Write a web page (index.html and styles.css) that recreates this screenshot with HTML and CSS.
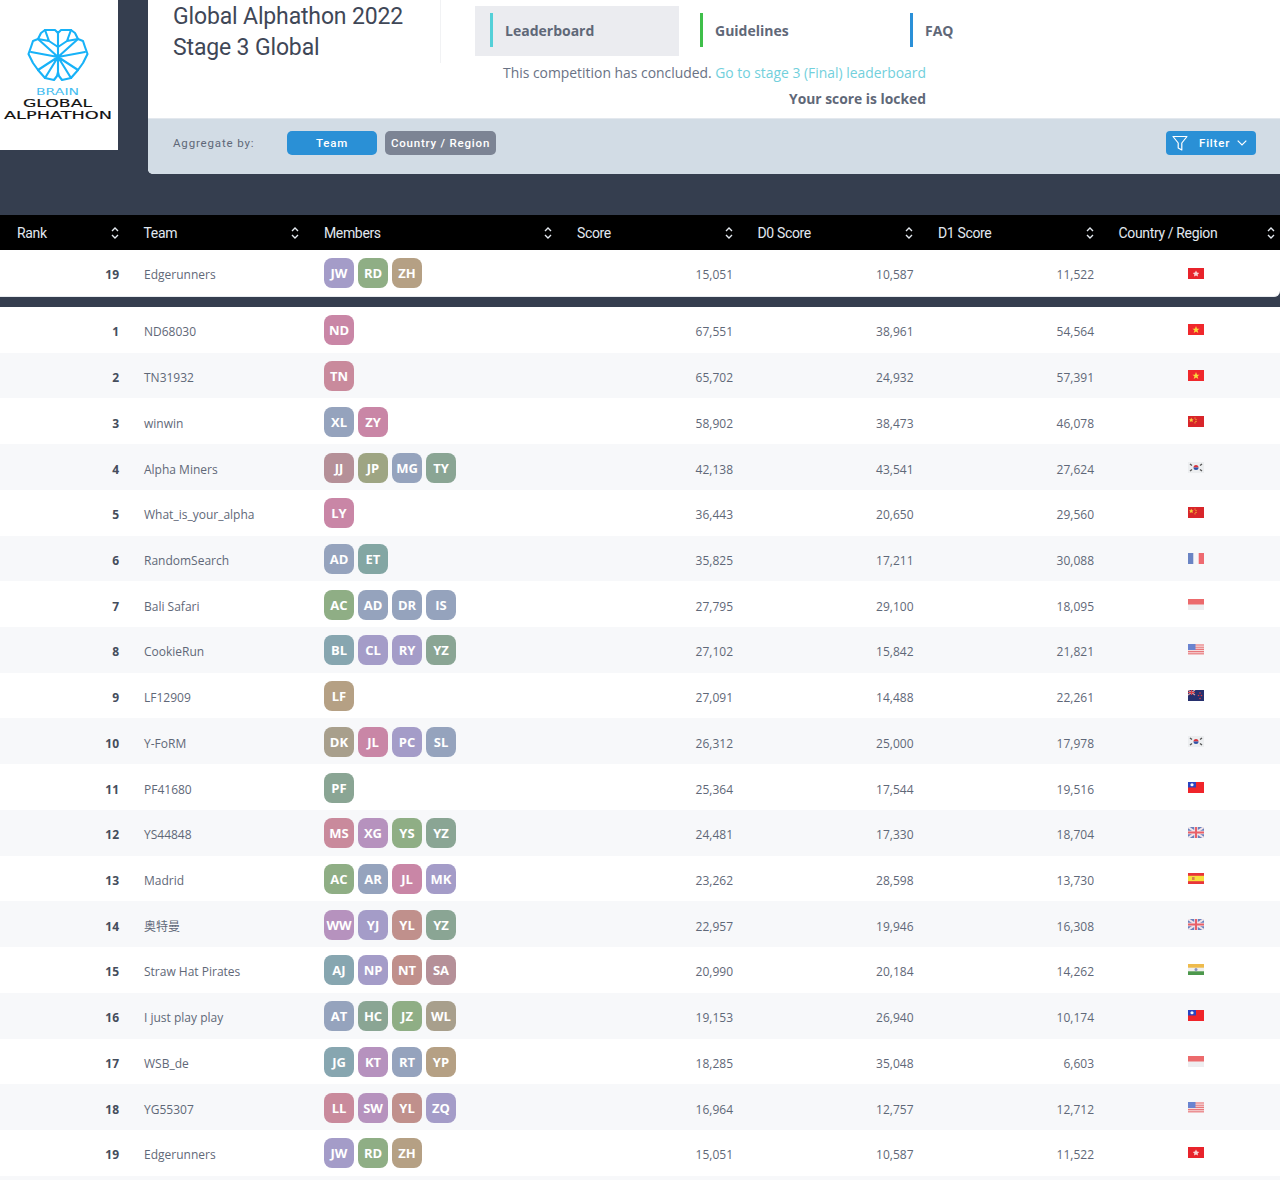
FILE: index.html
```html
<!DOCTYPE html>
<html lang="en">
<head>
    <meta charset="UTF-8">
    <meta name="viewport" content="width=device-width, initial-scale=1.0">
    <title>Global Alphathon 2022 Leaderboard</title>
    <link rel="stylesheet" href="styles.css">
</head>
<body>

    <svg class="defs" xmlns="http://www.w3.org/2000/svg">
        <symbol id="sort" viewBox="0 0 8 14"><path d="M1 5 L4 2 L7 5 M1 9 L4 12 L7 9" fill="none" stroke="#e4e9ef" stroke-width="1.4"/></symbol>
        <symbol id="hk" viewBox="0 0 16 11"><rect width="16" height="11" fill="#e8232b"/><path d="M8 2.5 L9 4.6 L11.2 4.9 L9.6 6.4 L10 8.6 L8 7.5 L6 8.6 L6.4 6.4 L4.8 4.9 L7 4.6 Z" fill="#f8d4d4"/></symbol>
        <symbol id="vn" viewBox="0 0 16 11"><rect width="16" height="11" fill="#f0282c"/><path d="M8 2 L9 4.7 L11.6 4.7 L9.5 6.3 L10.3 9 L8 7.4 L5.7 9 L6.5 6.3 L4.4 4.7 L7 4.7 Z" fill="#f8dc3c"/></symbol>
        <symbol id="cn" viewBox="0 0 16 11"><rect width="16" height="11" fill="#d8252a"/><path d="M3.2 1.5 L4 3.2 L5.6 3.4 L4.4 4.4 L4.8 6 L3.2 5.2 L1.7 6 L2.1 4.4 L1 3.4 L2.6 3.2 Z" fill="#f4cf3a"/><circle cx="7" cy="2" r=".6" fill="#f4cf3a"/><circle cx="8" cy="3.6" r=".6" fill="#f4cf3a"/><circle cx="8" cy="5.4" r=".6" fill="#f4cf3a"/><circle cx="7" cy="6.8" r=".6" fill="#f4cf3a"/></symbol>
        <symbol id="kr" viewBox="0 0 16 11"><rect width="16" height="11" fill="#eceef0"/><path d="M5.5 5.5 A2.5 2.5 0 0 1 10.5 5.5 Z" fill="#d8343c"/><path d="M5.5 5.5 A2.5 2.5 0 0 0 10.5 5.5 Z" fill="#2e54a8"/><path d="M2 2 L4 3.6 M12 3.6 L14 2 M2 9 L4 7.4 M12 7.4 L14 9" stroke="#555" stroke-width="1.3"/></symbol>
        <symbol id="fr" viewBox="0 0 16 11"><rect width="16" height="11" fill="#f6f6f8"/><rect width="5.3" height="11" fill="#6a84c4"/><rect x="10.7" width="5.3" height="11" fill="#ee6a70"/></symbol>
        <symbol id="id" viewBox="0 0 16 11"><rect width="16" height="11" fill="#eeeef0"/><rect width="16" height="5.5" fill="#ec6a6c"/></symbol>
        <symbol id="us" viewBox="0 0 16 11"><rect width="16" height="11" fill="#f6dcdc"/><path d="M0 1 H16 M0 3.2 H16 M0 5.4 H16 M0 7.6 H16 M0 9.8 H16" stroke="#e8787c" stroke-width="1.1"/><rect width="7.5" height="6" fill="#6a84d0"/></symbol>
        <symbol id="nz" viewBox="0 0 16 11"><rect width="16" height="11" fill="#27306e"/><path d="M0 0 L7 5 M7 0 L0 5" stroke="#d8a0a8" stroke-width="1.2"/><path d="M3.5 0 V5 M0 2.5 H7" stroke="#d84048" stroke-width="1.2"/><circle cx="12" cy="3" r=".8" fill="#e03840"/><circle cx="10.5" cy="5.5" r=".8" fill="#e03840"/><circle cx="13.5" cy="5.5" r=".8" fill="#e03840"/><circle cx="12" cy="8.5" r=".8" fill="#e03840"/></symbol>
        <symbol id="tw" viewBox="0 0 16 11"><rect width="16" height="11" fill="#f0242a"/><rect width="8" height="5.5" fill="#2a44c0"/><circle cx="4" cy="2.75" r="1.6" fill="#f6f6fa"/></symbol>
        <symbol id="uk" viewBox="0 0 16 11"><rect width="16" height="11" fill="#6a80bc"/><path d="M0 0 L16 11 M16 0 L0 11" stroke="#f0e4ea" stroke-width="2"/><path d="M8 0 V11 M0 5.5 H16" stroke="#f0e4ea" stroke-width="3.6"/><path d="M8 0 V11 M0 5.5 H16" stroke="#e86068" stroke-width="2"/></symbol>
        <symbol id="es" viewBox="0 0 16 11"><rect width="16" height="11" fill="#e8343a"/><rect y="2.8" width="16" height="5.4" fill="#f6e03c"/><rect x="4" y="4" width="2.6" height="3" fill="#d8804c"/></symbol>
        <symbol id="in" viewBox="0 0 16 11"><rect width="16" height="11" fill="#f0f0ee"/><rect width="16" height="3.7" fill="#eebb4c"/><rect y="7.3" width="16" height="3.7" fill="#4c984c"/><circle cx="8" cy="5.5" r="1.5" fill="#8a94c0"/></symbol>
    </svg>

    <div class="top">
        <a class="logo" href="#">
            <svg width="118" height="124" viewBox="0 0 118 124" xmlns="http://www.w3.org/2000/svg">
                <g fill="none" stroke="#17b2f8" stroke-width="2.1" stroke-linejoin="round" stroke-linecap="round">
                    <path d="M58 33 L55 30 L45 30 L41 33 L38 39 L33 41 L31 47 L28.5 54 L33 63 L38 70 L45 78 L54 80 L57 76 L58 72 L59 76 L62 80 L71 78 L78 70 L83 63 L87.5 54 L85 47 L83 41 L78 39 L75 33 L71 30 L61 30 Z"/>
                    <path d="M58 33 V72 M58 57 L31 52 M58 57 L85 52 M58 57 L38 39 M58 57 L78 39 M58 57 L45 78 M58 57 L71 78 M58 57 L38 70 M58 57 L78 70"/>
                    <path d="M45 30 L49 41 L58 47 L67 41 L71 30 M38 39 L49 41 M78 39 L67 41"/>
                </g>
                <text class="logo-brain" x="36" y="95" textLength="43" lengthAdjust="spacingAndGlyphs">BRAIN</text>
                <text class="logo-name" x="23" y="107" textLength="69" lengthAdjust="spacingAndGlyphs">GLOBAL</text>
                <text class="logo-name" x="4" y="119" textLength="108" lengthAdjust="spacingAndGlyphs">ALPHATHON</text>
            </svg>
        </a>

        <div class="card">
            <div class="card-main">
                <h1 class="title">Global Alphathon 2022<br>Stage 3 Global</h1>
                <div class="card-side">
                    <nav class="tabs">
                        <a class="tab tab-active tab-teal" href="#">Leaderboard</a>
                        <a class="tab tab-green" href="#">Guidelines</a>
                        <a class="tab tab-blue" href="#">FAQ</a>
                    </nav>
                    <p class="notice">This competition has concluded. <a href="#">Go to stage 3 (Final) leaderboard</a></p>
                    <p class="locked">Your score is locked</p>
                </div>
            </div>
            <div class="toolbar">
                <span class="aggregate">Aggregate by:</span>
                <button class="pill pill-team">Team</button>
                <button class="pill pill-country">Country / Region</button>
                <button class="filter">
                    <svg width="16" height="16" viewBox="0 0 16 16"><path d="M1 1.5 H15 L9.8 8 V15 L6.2 13 V8 Z" fill="none" stroke="#fff" stroke-width="1.2" stroke-linejoin="round"/></svg>
                    <span>Filter</span>
                    <svg width="10" height="6" viewBox="0 0 10 6"><path d="M.7 .7 L5 5 L9.3 .7" fill="none" stroke="#fff" stroke-width="1.2"/></svg>
                </button>
            </div>
        </div>
    </div>

    <div class="board">
        <div class="row head">
            <div class="hcell"><span>Rank</span><svg class="sort"><use href="#sort"/></svg></div>
            <div class="hcell"><span>Team</span><svg class="sort"><use href="#sort"/></svg></div>
            <div class="hcell"><span>Members</span><svg class="sort"><use href="#sort"/></svg></div>
            <div class="hcell"><span>Score</span><svg class="sort"><use href="#sort"/></svg></div>
            <div class="hcell"><span>D0 Score</span><svg class="sort"><use href="#sort"/></svg></div>
            <div class="hcell"><span>D1 Score</span><svg class="sort"><use href="#sort"/></svg></div>
            <div class="hcell hcell-last"><span>Country / Region</span><svg class="sort"><use href="#sort"/></svg></div>
        </div>

        <div class="row mine">
            <div class="rank">19</div><div class="team">Edgerunners</div>
            <div class="members"><span class="av violet">JW</span><span class="av green">RD</span><span class="av tan">ZH</span></div>
            <div class="num">15,051</div><div class="num">10,587</div><div class="num">11,522</div>
            <div class="flag"><svg><use href="#hk"/></svg></div>
        </div>

        <div class="rows">
            <div class="row">
                <div class="rank">1</div><div class="team">ND68030</div>
                <div class="members"><span class="av pink">ND</span></div>
                <div class="num">67,551</div><div class="num">38,961</div><div class="num">54,564</div>
                <div class="flag"><svg><use href="#vn"/></svg></div>
            </div>
            <div class="row">
                <div class="rank">2</div><div class="team">TN31932</div>
                <div class="members"><span class="av rose">TN</span></div>
                <div class="num">65,702</div><div class="num">24,932</div><div class="num">57,391</div>
                <div class="flag"><svg><use href="#vn"/></svg></div>
            </div>
            <div class="row">
                <div class="rank">3</div><div class="team">winwin</div>
                <div class="members"><span class="av slate">XL</span><span class="av pink">ZY</span></div>
                <div class="num">58,902</div><div class="num">38,473</div><div class="num">46,078</div>
                <div class="flag"><svg><use href="#cn"/></svg></div>
            </div>
            <div class="row">
                <div class="rank">4</div><div class="team">Alpha Miners</div>
                <div class="members"><span class="av dusty">JJ</span><span class="av olive">JP</span><span class="av slate">MG</span><span class="av sage">TY</span></div>
                <div class="num">42,138</div><div class="num">43,541</div><div class="num">27,624</div>
                <div class="flag"><svg><use href="#kr"/></svg></div>
            </div>
            <div class="row">
                <div class="rank">5</div><div class="team">What_is_your_alpha</div>
                <div class="members"><span class="av pink">LY</span></div>
                <div class="num">36,443</div><div class="num">20,650</div><div class="num">29,560</div>
                <div class="flag"><svg><use href="#cn"/></svg></div>
            </div>
            <div class="row">
                <div class="rank">6</div><div class="team">RandomSearch</div>
                <div class="members"><span class="av slate">AD</span><span class="av teal">ET</span></div>
                <div class="num">35,825</div><div class="num">17,211</div><div class="num">30,088</div>
                <div class="flag"><svg><use href="#fr"/></svg></div>
            </div>
            <div class="row">
                <div class="rank">7</div><div class="team">Bali Safari</div>
                <div class="members"><span class="av green">AC</span><span class="av slate">AD</span><span class="av slate">DR</span><span class="av slate">IS</span></div>
                <div class="num">27,795</div><div class="num">29,100</div><div class="num">18,095</div>
                <div class="flag"><svg><use href="#id"/></svg></div>
            </div>
            <div class="row">
                <div class="rank">8</div><div class="team">CookieRun</div>
                <div class="members"><span class="av steel">BL</span><span class="av violet">CL</span><span class="av violet">RY</span><span class="av sage">YZ</span></div>
                <div class="num">27,102</div><div class="num">15,842</div><div class="num">21,821</div>
                <div class="flag"><svg><use href="#us"/></svg></div>
            </div>
            <div class="row">
                <div class="rank">9</div><div class="team">LF12909</div>
                <div class="members"><span class="av tan">LF</span></div>
                <div class="num">27,091</div><div class="num">14,488</div><div class="num">22,261</div>
                <div class="flag"><svg><use href="#nz"/></svg></div>
            </div>
            <div class="row">
                <div class="rank">10</div><div class="team">Y-FoRM</div>
                <div class="members"><span class="av taupe">DK</span><span class="av pink">JL</span><span class="av violet">PC</span><span class="av slate">SL</span></div>
                <div class="num">26,312</div><div class="num">25,000</div><div class="num">17,978</div>
                <div class="flag"><svg><use href="#kr"/></svg></div>
            </div>
            <div class="row">
                <div class="rank">11</div><div class="team">PF41680</div>
                <div class="members"><span class="av sage">PF</span></div>
                <div class="num">25,364</div><div class="num">17,544</div><div class="num">19,516</div>
                <div class="flag"><svg><use href="#tw"/></svg></div>
            </div>
            <div class="row">
                <div class="rank">12</div><div class="team">YS44848</div>
                <div class="members"><span class="av rose">MS</span><span class="av orchid">XG</span><span class="av green">YS</span><span class="av sage">YZ</span></div>
                <div class="num">24,481</div><div class="num">17,330</div><div class="num">18,704</div>
                <div class="flag"><svg><use href="#uk"/></svg></div>
            </div>
            <div class="row">
                <div class="rank">13</div><div class="team">Madrid</div>
                <div class="members"><span class="av green">AC</span><span class="av slate">AR</span><span class="av pink">JL</span><span class="av violet">MK</span></div>
                <div class="num">23,262</div><div class="num">28,598</div><div class="num">13,730</div>
                <div class="flag"><svg><use href="#es"/></svg></div>
            </div>
            <div class="row">
                <div class="rank">14</div><div class="team">奥特曼</div>
                <div class="members"><span class="av orchid">WW</span><span class="av violet">YJ</span><span class="av clay">YL</span><span class="av sage">YZ</span></div>
                <div class="num">22,957</div><div class="num">19,946</div><div class="num">16,308</div>
                <div class="flag"><svg><use href="#uk"/></svg></div>
            </div>
            <div class="row">
                <div class="rank">15</div><div class="team">Straw Hat Pirates</div>
                <div class="members"><span class="av steel">AJ</span><span class="av violet">NP</span><span class="av clay">NT</span><span class="av dusty">SA</span></div>
                <div class="num">20,990</div><div class="num">20,184</div><div class="num">14,262</div>
                <div class="flag"><svg><use href="#in"/></svg></div>
            </div>
            <div class="row">
                <div class="rank">16</div><div class="team">I just play play</div>
                <div class="members"><span class="av slate">AT</span><span class="av sage">HC</span><span class="av green">JZ</span><span class="av taupe">WL</span></div>
                <div class="num">19,153</div><div class="num">26,940</div><div class="num">10,174</div>
                <div class="flag"><svg><use href="#tw"/></svg></div>
            </div>
            <div class="row">
                <div class="rank">17</div><div class="team">WSB_de</div>
                <div class="members"><span class="av steel">JG</span><span class="av orchid">KT</span><span class="av slate">RT</span><span class="av tan">YP</span></div>
                <div class="num">18,285</div><div class="num">35,048</div><div class="num">6,603</div>
                <div class="flag"><svg><use href="#id"/></svg></div>
            </div>
            <div class="row">
                <div class="rank">18</div><div class="team">YG55307</div>
                <div class="members"><span class="av rose">LL</span><span class="av orchid">SW</span><span class="av clay">YL</span><span class="av violet">ZQ</span></div>
                <div class="num">16,964</div><div class="num">12,757</div><div class="num">12,712</div>
                <div class="flag"><svg><use href="#us"/></svg></div>
            </div>
            <div class="row">
                <div class="rank">19</div><div class="team">Edgerunners</div>
                <div class="members"><span class="av violet">JW</span><span class="av green">RD</span><span class="av tan">ZH</span></div>
                <div class="num">15,051</div><div class="num">10,587</div><div class="num">11,522</div>
                <div class="flag"><svg><use href="#hk"/></svg></div>
            </div>
        </div>
    </div>

</body>
</html>
```

FILE: styles.css
```css
body {
    margin: 0;
    background-color: #353e4f;
    font-family: "Open Sans", "Noto Sans CJK SC", sans-serif;
    color: #5f6878;
}
a {
    text-decoration: none;
    color: inherit;
}
.defs {
    display: none;
}

/* top area */
.top {
    display: flex;
    align-items: flex-start;
    gap: 30px;
    margin-bottom: 41px;
}
.logo {
    display: block;
    flex: none;
    width: 118px;
    height: 150px;
    background-color: #fff;
}
.logo-brain {
    font-family: "DejaVu Sans", sans-serif;
    font-size: 9.5px;
    fill: #45bdf0;
}
.logo-name {
    font-family: "DejaVu Sans", sans-serif;
    font-size: 11px;
    fill: #111;
    stroke: #111;
    stroke-width: 0.15;
}
.card {
    flex: 1;
    height: 174px;
    background-color: #fff;
    border-bottom-left-radius: 5px;
    overflow: hidden;
}
.card-main {
    display: flex;
    height: 118px;
    padding-left: 25px;
}
.title {
    width: 268px;
    height: 63px;
    margin: 0;
    padding-top: 1px;
    box-sizing: border-box;
    border-right: 1px solid #f1f2f4;
    font-family: Roboto, sans-serif;
    font-size: 23px;
    font-weight: 400;
    letter-spacing: -0.15px;
    line-height: 31px;
    color: #3f4757;
}
.card-side {
    width: 451px;
    margin-left: 34px;
    padding-top: 6px;
    text-align: right;
}
.tabs {
    display: flex;
    gap: 6px;
    text-align: left;
}
.tab {
    position: relative;
    flex: none;
    box-sizing: border-box;
    width: 204px;
    height: 50px;
    padding-left: 30px;
    font-size: 14px;
    font-weight: 700;
    line-height: 50px;
    color: #5f6878;
}
.tab::before {
    content: "";
    position: absolute;
    left: 15px;
    top: 7px;
    width: 3px;
    height: 34px;
}
.tab-active {
    background-color: #ebecf0;
}
.tab-teal::before {
    background-color: #54d0d8;
}
.tab-green::before {
    background-color: #3fbf4a;
}
.tab-blue::before {
    background-color: #2a90d8;
}
.notice,
.locked {
    margin: 0;
}
.notice {
    margin-top: 7px;
    font-size: 13.9px;
    line-height: 20px;
    color: #697285;
}
.notice a {
    color: #72d0dc;
}
.locked {
    margin-top: 6px;
    font-size: 13.85px;
    line-height: 20px;
    font-weight: 700;
}

/* aggregate bar */
.toolbar {
    display: flex;
    align-items: center;
    box-sizing: border-box;
    height: 56px;
    padding: 0 24px 7px 25px;
    background-color: #d2dce5;
    border-top: 1px solid #e3e8ee;
    font-family: Roboto, sans-serif;
    letter-spacing: 0.85px;
}
.aggregate {
    width: 114px;
    font-size: 11.5px;
    color: #5f6878;
}
.pill {
    height: 24px;
    border: none;
    border-radius: 5px;
    padding: 0;
    color: #fff;
    font: inherit;
    font-size: 11.5px;
    font-weight: 500;
    letter-spacing: 0.8px;
}
.pill-team {
    width: 90px;
    margin-right: 8px;
    background-color: #2a90d6;
}
.pill-country {
    width: 111px;
    background-color: #7c8494;
}
.filter {
    display: flex;
    align-items: center;
    gap: 11px;
    width: 90px;
    height: 24px;
    margin-left: auto;
    padding: 0 0 0 6px;
    border: none;
    border-radius: 4px;
    background-color: #2a90d6;
    color: #fff;
    font: inherit;
    font-size: 11.5px;
    font-weight: 500;
    letter-spacing: 0.8px;
}
.filter span {
    margin-right: -4px;
}

/* leaderboard */
.row {
    display: grid;
    grid-template-columns: 126.5px 180.5px 253px 180.5px 180.5px 180.5px 1fr;
    align-items: center;
    height: 45.72px;
    font-size: 12px;
    background-color: #fff;
}
.rows {
    margin-top: 10px;
    padding-bottom: 4.3px;
    background-color: #f7f8fa;
}
.rows .row {
    box-sizing: border-box;
    padding-top: 1px;
}
.rows .row:nth-child(even) {
    background-color: #f7f8fa;
}
.rows .rank,
.rows .team,
.rows .num {
    padding-top: 3px;
}
.rows .flag {
    padding-bottom: 1px;
}
.head {
    height: 35px;
    background-color: #000;
    font-family: Roboto, sans-serif;
    font-size: 14px;
    letter-spacing: -0.35px;
    color: #e2e8f0;
}
.hcell {
    display: flex;
    align-items: center;
    justify-content: space-between;
    padding: 0 8px 0 17px;
}
.hcell-last {
    padding-right: 5px;
}
.sort {
    width: 8px;
    height: 14px;
}
.mine {
    box-sizing: border-box;
    height: 47px;
    border-bottom: 1px solid #e8ebef;
    border-bottom-right-radius: 6px;
}
.rank,
.team,
.num {
    padding-top: 2px;
}
.rank {
    padding-right: 7.5px;
    text-align: right;
    font-weight: 700;
    color: #454d5c;
}
.team {
    padding-left: 17.5px;
}
.members {
    display: flex;
    gap: 4px;
    padding-left: 17px;
}
.num {
    padding-right: 7.5px;
    text-align: right;
}
.flag {
    display: flex;
    justify-content: center;
    padding-left: 10px;
}
.flag svg {
    width: 16px;
    height: 11px;
    filter: blur(0.5px);
}
.av {
    width: 30px;
    height: 30px;
    border-radius: 8px;
    color: #fff;
    font-size: 13px;
    font-weight: 700;
    line-height: 30px;
    text-align: center;
}
.violet { background-color: #a49cc8; }
.green { background-color: #8fae85; }
.tan { background-color: #b5a084; }
.pink { background-color: #c986a6; }
.rose { background-color: #c98a9c; }
.slate { background-color: #95a3bd; }
.dusty { background-color: #b59098; }
.olive { background-color: #9ea583; }
.sage { background-color: #8aa594; }
.teal { background-color: #83a6a3; }
.steel { background-color: #87a6b0; }
.taupe { background-color: #a89f8c; }
.orchid { background-color: #b692be; }
.clay { background-color: #c0908c; }
```
